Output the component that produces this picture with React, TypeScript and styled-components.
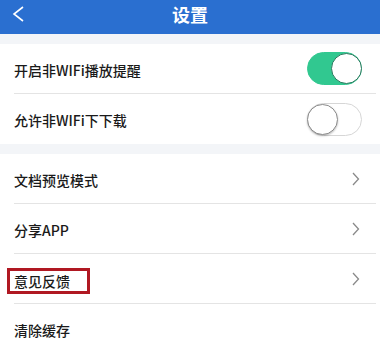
import React from "react";
import styled, { createGlobalStyle } from "styled-components";

const Global = createGlobalStyle`
  html, body { margin: 0; padding: 0; background: #f3f5f8; }
  body { font-family: "Noto Sans CJK SC", "Noto Sans", sans-serif; }
`;

const Page = styled.div`
  width: 380px;
  height: 346px;
  overflow: hidden;
  background: #f3f5f8;
`;

const Header = styled.header`
  height: 34px;
  background: #2a6fd0;
  display: grid;
  grid-template-columns: 1fr auto 1fr;
  align-items: start;
`;

const Back = styled.div`
  padding: 6px 0 0 10px;
  display: flex;
`;

const Title = styled.h1`
  margin: 0;
  font-size: 18px;
  line-height: 28px;
  font-weight: 700;
  color: #fff;
`;

const Group = styled.section<{ $gap: number }>`
  background: #fff;
  margin-top: ${(p) => p.$gap}px;
`;

const Row = styled.div<{ $last?: boolean }>`
  height: 50px;
  box-sizing: border-box;
  margin: 0 4px 0 14px;
  padding-right: 14px;
  display: flex;
  align-items: center;
  justify-content: space-between;
  border-bottom: ${(p) => (p.$last ? "none" : "1px solid #e4e4e4")};
`;

const Label = styled.span`
  font-size: 14px;
  font-weight: 500;
  color: #1a1a1a;
  padding-top: 2px;
`;

const Highlight = styled.span`
  font-size: 14px;
  font-weight: 500;
  line-height: 17px;
  color: #1a1a1a;
  border: 3px solid #b01822;
  padding: 2px 17px 1px 4px;
  margin: 5px 0 0 -7px;
`;

const Track = styled.div<{ $on: boolean }>`
  width: 55px;
  height: 33px;
  box-sizing: border-box;
  border-radius: 17px;
  background: ${(p) => (p.$on ? "#31c890" : "#fff")};
  border: 1.5px solid ${(p) => (p.$on ? "#31c890" : "#d6d6d6")};
  display: flex;
  justify-content: ${(p) => (p.$on ? "flex-end" : "flex-start")};
  align-items: center;
`;

const Knob = styled.div<{ $on: boolean }>`
  width: 31px;
  height: 31px;
  box-sizing: border-box;
  border-radius: 50%;
  background: #fff;
  border: 1px solid ${(p) => (p.$on ? "#2c7a5f" : "#8c8c8c")};
  box-shadow: ${(p) => (p.$on ? "none" : "0 1px 2px rgba(0,0,0,0.25)")};
  margin: ${(p) => (p.$on ? "0 -1px 0 0" : "0 0 0 -1px")};
`;

const Toggle = ({ on }: { on: boolean }) => (
  <Track $on={on}>
    <Knob $on={on} />
  </Track>
);

const Chevron = () => (
  <svg width="12" height="14" viewBox="0 0 12 14">
    <path d="M3 1 L8.5 7 L3 13" fill="none" stroke="#8a8a8a" strokeWidth="1.3" />
  </svg>
);

export default function App() {
  return (
    <Page>
      <Global />
      <Header>
        <Back>
          <svg width="16" height="16" viewBox="0 0 16 16">
            <path d="M13 1 L4 8 L13 15" fill="none" stroke="#fff" strokeWidth="1.6" />
          </svg>
        </Back>
        <Title>设置</Title>
        <div />
      </Header>
      <Group $gap={10}>
        <Row>
          <Label>开启非WIFi播放提醒</Label>
          <Toggle on={true} />
        </Row>
        <Row $last>
          <Label>允许非WIFi下下载</Label>
          <Toggle on={false} />
        </Row>
      </Group>
      <Group $gap={10}>
        <Row>
          <Label>文档预览模式</Label>
          <Chevron />
        </Row>
        <Row>
          <Label>分享APP</Label>
          <Chevron />
        </Row>
        <Row>
          <Highlight>意见反馈</Highlight>
          <Chevron />
        </Row>
        <Row $last>
          <Label>清除缓存</Label>
        </Row>
      </Group>
    </Page>
  );
}
